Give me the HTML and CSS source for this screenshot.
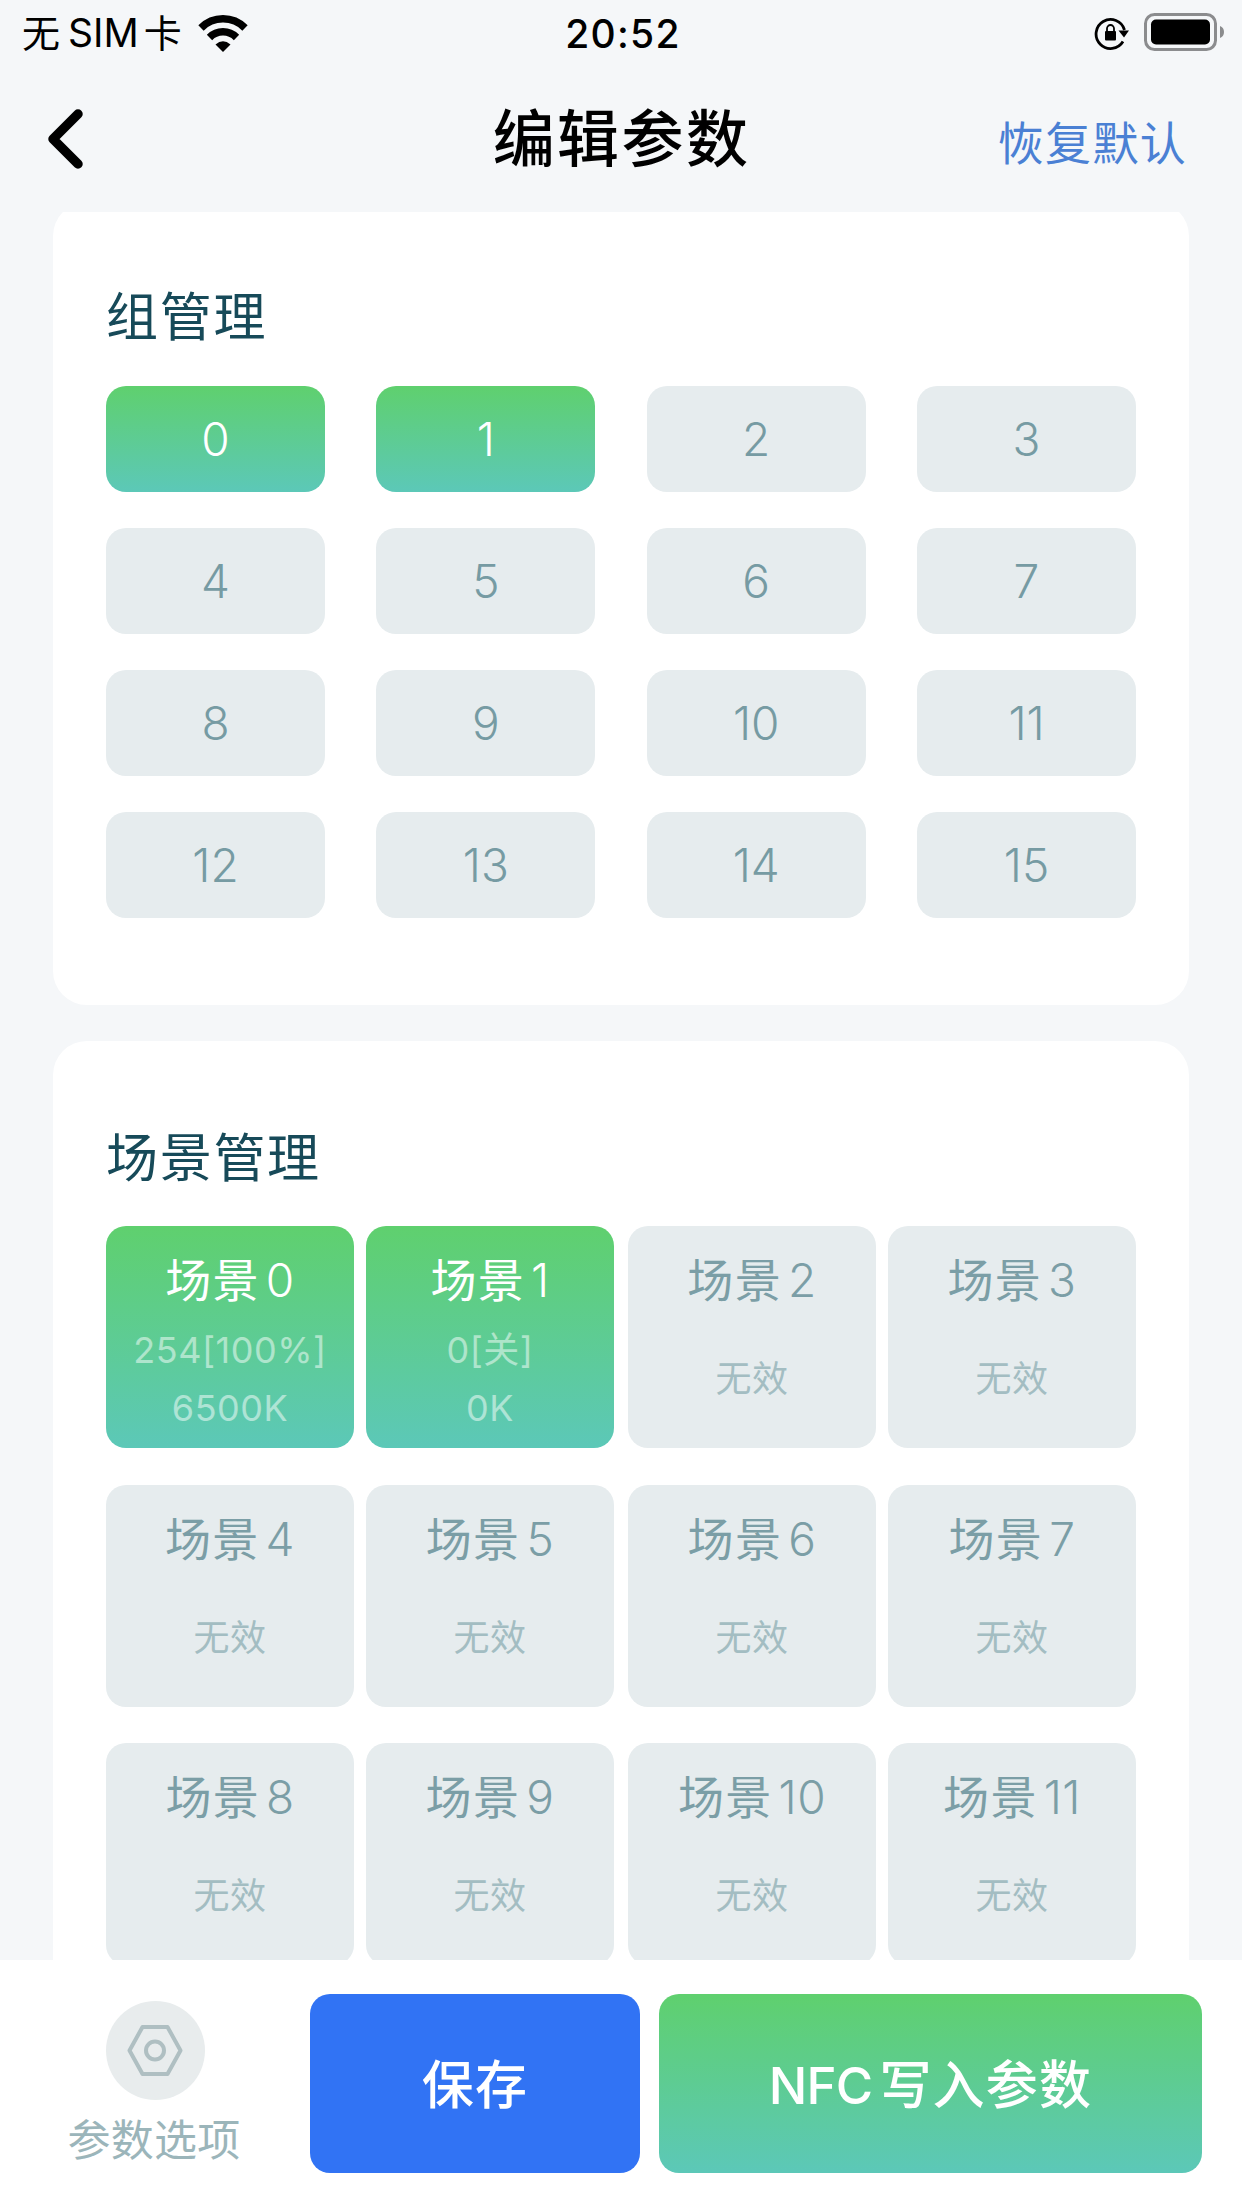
FILE: index.html
```
<!DOCTYPE html>
<html lang="zh-CN">
<head>
    <meta charset="UTF-8">
    <meta name="viewport" content="width=device-width, initial-scale=1.0">
    <title>编辑参数</title>
    <link rel="stylesheet" href="styles.css">
</head>
<body>
    <div class="status-bar">
        <div class="status-left">
            <span class="carrier">无<span class="latin">SIM</span>卡</span>
            <svg class="wifi" width="50" height="38" viewBox="0 0 50 38">
                <path d="M3 14 A31 31 0 0 1 47 14" fill="none" stroke="#000" stroke-width="7.5"/>
                <path d="M11.5 23.5 A19 19 0 0 1 38.5 23.5" fill="none" stroke="#000" stroke-width="7.5"/>
                <path d="M17.5 30.5 Q25 24 32.5 30.5 L25 38 Z" fill="#000"/>
            </svg>
        </div>
        <div class="time">20:52</div>
        <div class="status-right">
            <svg width="36" height="34" viewBox="0 0 36 34">
                <path d="M29 25.5 A14.5 14.5 0 1 1 30.5 14" fill="none" stroke="#000" stroke-width="2.8"/>
                <path d="M24.5 14.5 H35 L30 21.5 Z" fill="#000"/>
                <rect x="11" y="15" width="11" height="9.5" rx="1" fill="#000"/>
                <path d="M13 16 V12.5 A3.5 3.5 0 0 1 20 12.5 V16" fill="none" stroke="#000" stroke-width="1.8"/>
            </svg>
            <svg class="battery" width="80" height="38" viewBox="0 0 80 38">
                <rect x="1.5" y="1.5" width="70" height="35" rx="9" fill="none" stroke="#8b8c8e" stroke-width="3"/>
                <rect x="7" y="6.5" width="59" height="25" rx="5" fill="#000"/>
                <path d="M76 13 Q80 14.5 80 19 Q80 23.5 76 25 Z" fill="#8b8c8e"/>
            </svg>
        </div>
    </div>

    <div class="nav-bar">
        <svg class="back" width="36" height="60" viewBox="0 0 36 60">
            <path d="M30 5 L5 30 L30 55" fill="none" stroke="#000" stroke-width="9.5" stroke-linecap="round" stroke-linejoin="round"/>
        </svg>
        <h1>编辑参数</h1>
        <a class="reset">恢复默认</a>
    </div>

    <div class="content">
        <!-- Groups -->
        <div class="card group-card">
            <h2>组管理</h2>
            <div class="groups">
                <div class="group active">0</div>
                <div class="group active">1</div>
                <div class="group">2</div>
                <div class="group">3</div>
                <div class="group">4</div>
                <div class="group">5</div>
                <div class="group">6</div>
                <div class="group">7</div>
                <div class="group">8</div>
                <div class="group">9</div>
                <div class="group">10</div>
                <div class="group">11</div>
                <div class="group">12</div>
                <div class="group">13</div>
                <div class="group">14</div>
                <div class="group">15</div>
            </div>
        </div>

        <!-- Scenes -->
        <div class="card scene-card">
            <h2>场景管理</h2>
            <div class="scenes">
                <div class="scene active">
                    <h3>场景<span class="num">0</span></h3>
                    <div class="value"><p>254[100%]</p><p>6500K</p></div>
                </div>
                <div class="scene active">
                    <h3>场景<span class="num">1</span></h3>
                    <div class="value"><p>0[关]</p><p>0K</p></div>
                </div>
                <div class="scene">
                    <h3>场景<span class="num">2</span></h3>
                    <div class="value"><p>无效</p></div>
                </div>
                <div class="scene">
                    <h3>场景<span class="num">3</span></h3>
                    <div class="value"><p>无效</p></div>
                </div>
                <div class="scene">
                    <h3>场景<span class="num">4</span></h3>
                    <div class="value"><p>无效</p></div>
                </div>
                <div class="scene">
                    <h3>场景<span class="num">5</span></h3>
                    <div class="value"><p>无效</p></div>
                </div>
                <div class="scene">
                    <h3>场景<span class="num">6</span></h3>
                    <div class="value"><p>无效</p></div>
                </div>
                <div class="scene">
                    <h3>场景<span class="num">7</span></h3>
                    <div class="value"><p>无效</p></div>
                </div>
                <div class="scene">
                    <h3>场景<span class="num">8</span></h3>
                    <div class="value"><p>无效</p></div>
                </div>
                <div class="scene">
                    <h3>场景<span class="num">9</span></h3>
                    <div class="value"><p>无效</p></div>
                </div>
                <div class="scene">
                    <h3>场景<span class="num">10</span></h3>
                    <div class="value"><p>无效</p></div>
                </div>
                <div class="scene">
                    <h3>场景<span class="num">11</span></h3>
                    <div class="value"><p>无效</p></div>
                </div>
            </div>
        </div>
    </div>

    <div class="bottom-bar">
        <div class="options">
            <div class="options-icon">
                <svg width="56" height="52" viewBox="0 0 56 52">
                    <path d="M15.5 2 H40.5 L53.5 25.500 L40.5 49 H15.5 L2.5 25.500 Z" fill="none" stroke="#afbfc2" stroke-width="4" stroke-linejoin="round"/>
                    <circle cx="28" cy="25.500" r="9" fill="none" stroke="#afbfc2" stroke-width="4"/>
                </svg>
            </div>
            <span>参数选项</span>
        </div>
        <button class="save">保存</button>
        <button class="write"><span class="nfc">NFC</span>写入参数</button>
    </div>
</body>
</html>
```
FILE: styles.css
```
* {
    box-sizing: border-box;
}

body {
    margin: 0;
    width: 1242px;
    height: 2208px;
    display: flex;
    flex-direction: column;
    overflow: hidden;
    background-color: #f5f7f9;
    font-family: Inter, "Noto Sans CJK SC", sans-serif;
}

h1, h2, h3, p {
    margin: 0;
    font-weight: 400;
}

.status-bar {
    height: 66px;
    flex: none;
    display: grid;
    grid-template-columns: 1fr auto 1fr;
    align-items: center;
    padding: 0 18px 0 22px;
    color: #000;
}

.status-left, .status-right {
    display: flex;
    align-items: center;
}

.status-right {
    justify-content: flex-end;
    gap: 14px;
}

.battery {
    margin-bottom: 2px;
}

.carrier {
    font-size: 38px;
    line-height: 66px;
}

.latin {
    margin: 0 5px 0 8px;
    font-size: 39px;
    letter-spacing: 0;
}

.wifi {
    margin-left: 16px;
}

.time {
    font-size: 39px;
    font-weight: 500;
    letter-spacing: 1.3px;
}

.nav-bar {
    height: 146px;
    flex: none;
    display: grid;
    grid-template-columns: 1fr auto 1fr;
    align-items: center;
    padding: 0 48px;
}

.nav-bar h1 {
    font-size: 62px;
    font-weight: 500;
    letter-spacing: 2.4px;
    line-height: 90px;
    padding: 2px 0 0 1px;
}

.reset {
    justify-self: end;
    margin: 2px 7px 0 0;
    font-size: 46px;
    letter-spacing: 1.3px;
    color: #4a80d4;
}

.content {
    flex: 1;
    min-height: 0;
    overflow: hidden;
    padding: 0 53px;
}

.card {
    background-color: #fff;
    border-radius: 34px;
    padding: 0 53px;
}

/* scrolled a little under the nav bar */
.group-card {
    height: 803px;
    margin-top: -10px;
    padding-top: 80px;
}

.scene-card {
    margin-top: 36px;
    padding-top: 82px;
    padding-bottom: 86px;
}

.card h2 {
    font-size: 52px;
    line-height: 72px;
    letter-spacing: 1.7px;
    color: #174a59;
    margin-bottom: 32px;
}

.scene-card h2 {
    margin-bottom: 31px;
}

.groups {
    display: grid;
    grid-template-columns: repeat(4, 219px);
    justify-content: space-between;
    row-gap: 36px;
}

.group {
    height: 106px;
    display: flex;
    align-items: center;
    justify-content: center;
    border-radius: 20px;
    font-size: 46px;
    font-weight: 350;
    background-color: #e6ecee;
    color: #769ba3;
}

.scenes {
    display: grid;
    grid-template-columns: 260px 262px 260px 248px;
    row-gap: 36.5px;
}

.scene {
    width: 248px;
    height: 222px;
    padding-top: 24px;
    display: flex;
    flex-direction: column;
    border-radius: 20px;
    text-align: center;
    background-color: #e6ecee;
    color: #7b9ea6;
}

.scene h3 {
    font-size: 46px;
    line-height: 60px;
    letter-spacing: 1.3px;
}

.num {
    margin-left: 6px;
    font-weight: 350;
    letter-spacing: 0.5px;
}

.value {
    flex: 1;
    display: flex;
    flex-direction: column;
    justify-content: center;
    font-size: 36px;
    font-weight: 350;
    line-height: 58px;
    letter-spacing: 0.5px;
    color: #a3bdc2;
}

.active {
    background: linear-gradient(#5fd06e, #5cc8b8);
    color: #fff;
}

.active .value {
    color: rgba(255, 255, 255, 0.5);
}

.bottom-bar {
    height: 248px;
    flex: none;
    display: flex;
    align-items: flex-start;
    padding: 34px 40px 0 0;
    background-color: #fff;
}

.options {
    width: 310px;
    padding-top: 7px;
    display: flex;
    flex-direction: column;
    align-items: center;
}

.options-icon {
    width: 99px;
    height: 99px;
    display: flex;
    align-items: center;
    justify-content: center;
    border-radius: 50%;
    background-color: #e8eced;
}

.options span {
    margin-top: 10px;
    padding-right: 2px;
    font-size: 43px;
    line-height: 60px;
    letter-spacing: 0.3px;
    color: #9bb5ba;
}

.bottom-bar button {
    height: 179px;
    border: none;
    border-radius: 20px;
    padding: 0 0 5px;
    font-family: inherit;
    font-size: 52px;
    font-weight: 500;
    letter-spacing: 1.2px;
    color: #fff;
}

.bottom-bar .save {
    width: 330px;
    margin-right: 19px;
    background-color: #3173f4;
}

.bottom-bar .write {
    flex: 1;
    background: linear-gradient(#5fd06e, #5cc8b8);
}

.nfc {
    margin-right: 7px;
    font-size: 51px;
    letter-spacing: -0.8px;
}
```
